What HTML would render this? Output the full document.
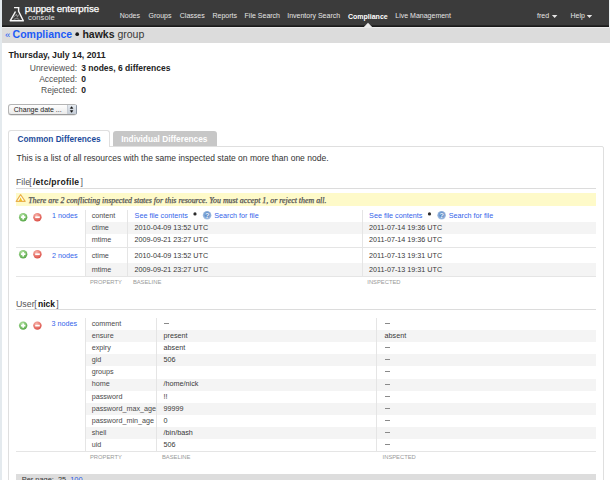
<!DOCTYPE html>
<html><head><meta charset="utf-8"><style>
html,body{margin:0;padding:0;background:#fff;width:610px;height:480px;overflow:hidden;position:relative}
body>div,body>svg{position:absolute}
.t{white-space:nowrap;font-family:"Liberation Sans",sans-serif}
</style></head><body>
<div style="left:0px;top:0px;width:2px;height:480px;background:#e4eaee;"></div>
<div style="left:609px;top:0px;width:1px;height:27px;background:#eef3f5;"></div>
<div style="left:2px;top:0px;width:607px;height:27px;background:#3b3b3b;"></div>
<div style="left:2px;top:25px;width:607px;height:2px;background:linear-gradient(#2c2c2c,#141414);"></div>
<div style="left:2px;top:27px;width:608px;height:1px;background:#ebebeb;"></div>
<div style="left:2px;top:28px;width:608px;height:15px;background:#dcdcdc;"></div>
<svg style="position:absolute;left:0;top:0" width="40" height="27" viewBox="0 0 40 27">
<g fill="none" stroke="#f8f8f8" stroke-width="1.45" stroke-linejoin="round">
<path d="M14.0 7.6 H19.4 M18.6 7.6 V11.3 L23.3 20.8 H10.2 L15.5 11.5"/>
</g>
<g fill="none" stroke="#9c9c9c" stroke-width="0.9">
<path d="M13.2 17.6 L15.4 15.2 L17.6 16.2 M13.8 19.4 L16.6 18.4 L19.4 19.4 M15.9 13.8 L17.2 15.4 M18.6 14.6 L17.2 17.4"/>
</g>
</svg>
<div class="t" style="left:24.8px;top:3.53px;font-size:9.75px;line-height:9.75px;color:#ffffff;font-weight:normal;font-family:'Liberation Sans', sans-serif;font-style:normal;letter-spacing:-0.1px;-webkit-text-stroke:0.25px #fff">puppet enterprise</div>
<div class="t" style="left:28.0px;top:14.40px;font-size:7.6px;line-height:7.6px;color:#e2e2e2;font-weight:normal;font-family:'Liberation Sans', sans-serif;font-style:normal;letter-spacing:0.1px">console</div>
<div class="t" style="left:119.69999999999999px;top:12.10px;font-size:7px;line-height:7px;color:#e5e5e5;font-weight:normal;font-family:'Liberation Sans', sans-serif;font-style:normal;">Nodes</div>
<div class="t" style="left:148.5px;top:12.10px;font-size:7px;line-height:7px;color:#e5e5e5;font-weight:normal;font-family:'Liberation Sans', sans-serif;font-style:normal;">Groups</div>
<div class="t" style="left:179.79999999999998px;top:12.10px;font-size:7px;line-height:7px;color:#e5e5e5;font-weight:normal;font-family:'Liberation Sans', sans-serif;font-style:normal;">Classes</div>
<div class="t" style="left:212.5px;top:12.10px;font-size:7px;line-height:7px;color:#e5e5e5;font-weight:normal;font-family:'Liberation Sans', sans-serif;font-style:normal;">Reports</div>
<div class="t" style="left:244.6px;top:12.10px;font-size:7px;line-height:7px;color:#e5e5e5;font-weight:normal;font-family:'Liberation Sans', sans-serif;font-style:normal;">File Search</div>
<div class="t" style="left:287.20000000000005px;top:12.10px;font-size:7px;line-height:7px;color:#e5e5e5;font-weight:normal;font-family:'Liberation Sans', sans-serif;font-style:normal;">Inventory Search</div>
<div class="t" style="left:348.0px;top:12.80px;font-size:7px;line-height:7px;color:#ffffff;font-weight:bold;font-family:'Liberation Sans', sans-serif;font-style:normal;">Compliance</div>
<div class="t" style="left:395.3px;top:12.10px;font-size:7px;line-height:7px;color:#e5e5e5;font-weight:normal;font-family:'Liberation Sans', sans-serif;font-style:normal;">Live Management</div>
<div class="t" style="left:537.0px;top:12.10px;font-size:7px;line-height:7px;color:#e5e5e5;font-weight:normal;font-family:'Liberation Sans', sans-serif;font-style:normal;">fred</div>
<div class="t" style="left:570.5px;top:12.10px;font-size:7px;line-height:7px;color:#e5e5e5;font-weight:normal;font-family:'Liberation Sans', sans-serif;font-style:normal;">Help</div>
<svg style="position:absolute;left:0;top:0" width="610" height="28" viewBox="0 0 610 28">
<path d="M551.9 14.9 H557.4 L554.65 18.0 Z M586.7 14.9 H592.2 L589.45 18.0 Z" fill="#e4e4e4"/>
<path d="M363.6 27.2 L368 22.8 L372.4 27.2 Z" fill="#ebebeb"/>
</svg>
<div class="t" style="left:5.0px;top:30.30px;font-size:9.6px;line-height:9.6px;color:#1d5bf6;font-weight:normal;font-family:'Liberation Sans', sans-serif;font-style:normal;">&laquo;</div>
<div class="t" style="left:12.6px;top:28.95px;font-size:10.5px;line-height:10.5px;color:#1d5bf6;font-weight:bold;font-family:'Liberation Sans', sans-serif;font-style:normal;">Compliance</div>
<svg style="position:absolute;left:0;top:0" width="100" height="45"><circle cx="77.2" cy="34.2" r="1.85" fill="#1a1a1a"/></svg>
<div class="t" style="left:82.4px;top:28.95px;font-size:10.5px;line-height:10.5px;color:#222;font-weight:bold;font-family:'Liberation Sans', sans-serif;font-style:normal;">hawks</div>
<div class="t" style="left:117.4px;top:28.95px;font-size:10.5px;line-height:10.5px;color:#383838;font-weight:normal;font-family:'Liberation Sans', sans-serif;font-style:normal;">group</div>
<div class="t" style="left:8.5px;top:50.62px;font-size:8.75px;line-height:8.75px;color:#222;font-weight:bold;font-family:'Liberation Sans', sans-serif;font-style:normal;">Thursday, July 14, 2011</div>
<div class="t" style="left:0;width:77px;text-align:right;top:64.30px;font-size:8.5px;line-height:8.5px;color:#505050">Unreviewed:</div>
<div class="t" style="left:81.2px;top:64.25px;font-size:8.5px;line-height:8.5px;color:#222;font-weight:bold;font-family:'Liberation Sans', sans-serif;font-style:normal;">3 nodes, 6 differences</div>
<div class="t" style="left:0;width:77px;text-align:right;top:75.40px;font-size:8.5px;line-height:8.5px;color:#505050">Accepted:</div>
<div class="t" style="left:81.2px;top:75.35px;font-size:8.5px;line-height:8.5px;color:#222;font-weight:bold;font-family:'Liberation Sans', sans-serif;font-style:normal;">0</div>
<div class="t" style="left:0;width:77px;text-align:right;top:85.90px;font-size:8.5px;line-height:8.5px;color:#505050">Rejected:</div>
<div class="t" style="left:81.2px;top:85.85px;font-size:8.5px;line-height:8.5px;color:#222;font-weight:bold;font-family:'Liberation Sans', sans-serif;font-style:normal;">0</div>
<div style="left:8px;top:104px;width:69px;height:11px;box-sizing:border-box;border:1px solid #b4b4b4;border-bottom-color:#9a9a9a;border-radius:3px;background:linear-gradient(#fefefe,#ebebeb);box-shadow:0 0.6px 0.6px rgba(0,0,0,0.18)"></div>
<div style="left:66.6px;top:105px;width:9.6px;height:9px;background:linear-gradient(#e6ebf1,#c4ccd6);border-radius:0 2px 2px 0;border-left:0.6px solid #c8cdd4"></div>
<div style="left:76px;top:105px;width:1px;height:9px;background:#8c96a4;border-radius:0 2px 2px 0"></div>
<svg style="position:absolute;left:0;top:0" width="90" height="120" viewBox="0 0 90 120"><path d="M70.3 108.4 L71.6 106.6 L72.9 108.4 Z M70.3 110.6 L71.6 112.4 L72.9 110.6 Z" fill="#111" stroke="#111" stroke-width="0.5" stroke-linejoin="round"/></svg>
<div class="t" style="left:13.8px;top:106.00px;font-size:7px;line-height:7px;color:#222;font-weight:normal;font-family:'Liberation Sans', sans-serif;font-style:normal;">Change date ...</div>
<div style="left:8px;top:145.5px;width:595.5px;height:400px;box-sizing:border-box;border:1px solid #dfdfdf;border-radius:2px"></div>
<div style="left:8px;top:130px;width:102px;height:17px;box-sizing:border-box;border:1px solid #dfdfdf;border-bottom:none;border-radius:3px 3px 0 0;background:#fff"></div>
<div style="left:9px;top:145px;width:100px;height:2px;background:#fff;"></div>
<div style="left:112.8px;top:131px;width:104px;height:15px;background:#c7c7c7;border-radius:3px 3px 0 0"></div>
<div class="t" style="left:17.6px;top:135.57px;font-size:8.25px;line-height:8.25px;color:#1d4c9b;font-weight:bold;font-family:'Liberation Sans', sans-serif;font-style:normal;">Common Differences</div>
<div class="t" style="left:121.2px;top:135.05px;font-size:8.3px;line-height:8.3px;color:#ffffff;font-weight:bold;font-family:'Liberation Sans', sans-serif;font-style:normal;">Individual Differences</div>
<div class="t" style="left:16.6px;top:153.74px;font-size:8.52px;line-height:8.52px;color:#333;font-weight:normal;font-family:'Liberation Sans', sans-serif;font-style:normal;">This is a list of all resources with the same inspected state on more than one node.</div>
<div class="t" style="left:16.0px;top:178.20px;font-size:8.8px;line-height:8.8px;color:#555;font-weight:normal;font-family:'Liberation Sans', sans-serif;font-style:normal;">File</div>
<div class="t" style="left:29.2px;top:178.20px;font-size:8.8px;line-height:8.8px;color:#556;font-weight:normal;font-family:'Liberation Sans', sans-serif;font-style:normal;">[</div>
<div class="t" style="left:32.9px;top:178.30px;font-size:8.6px;line-height:8.6px;color:#1a1a1a;font-weight:bold;font-family:'Liberation Sans', sans-serif;font-style:normal;letter-spacing:0.25px">/etc/profile</div>
<div class="t" style="left:80.4px;top:178.20px;font-size:8.8px;line-height:8.8px;color:#556;font-weight:normal;font-family:'Liberation Sans', sans-serif;font-style:normal;">]</div>
<div style="left:16.4px;top:188px;width:579.6px;height:1px;background:#dcdcdc;"></div>
<div style="left:16.4px;top:193px;width:579.6px;height:13.3px;background:#fefac9;"></div>
<svg style="position:absolute;left:0;top:0" width="30" height="210" viewBox="0 0 30 210"><path d="M20.6 194.6 L25.2 201.4 H16.2 Z" fill="#fffdf0" stroke="#eab04c" stroke-width="1.1" stroke-linejoin="round"/><path d="M20.6 197.3 L22.3 200.9 H18.9 Z" fill="#f0c020"/></svg>
<div class="t" style="left:28.2px;top:196.75px;font-size:7.9px;line-height:7.9px;color:#555555;font-weight:normal;font-family:'Liberation Serif', serif;font-style:italic;-webkit-text-stroke:0.25px #555">There are 2 conflicting inspected states for this resource. You must accept 1, or reject them all.</div>
<div style="left:85px;top:222.3px;width:511px;height:11.899999999999977px;background:#f4f4f4;"></div>
<div style="left:85px;top:262.6px;width:511px;height:13.699999999999989px;background:#f4f4f4;"></div>
<div style="left:16.4px;top:247px;width:579.6px;height:0.9px;background:#e5e5e5;"></div>
<div style="left:16.4px;top:276px;width:579.6px;height:0.9px;background:#e5e5e5;"></div>
<div style="left:84.6px;top:210px;width:0.9px;height:66.3px;background:#e5e5e5;"></div>
<div style="left:127px;top:210px;width:0.9px;height:66.3px;background:#e5e5e5;"></div>
<div style="left:362px;top:210px;width:0.9px;height:66.3px;background:#e5e5e5;"></div>
<svg style="position:absolute;left:0;top:0" width="50" height="480" viewBox="0 0 50 480">
<defs><radialGradient id="g217" cx="0.4" cy="0.3" r="0.7"><stop offset="0" stop-color="#b4e4a4"/><stop offset="1" stop-color="#58a848"/></radialGradient>
<radialGradient id="r217" cx="0.4" cy="0.3" r="0.7"><stop offset="0" stop-color="#f8b4aa"/><stop offset="1" stop-color="#dc5048"/></radialGradient></defs>
<circle cx="23.15" cy="217.2" r="4.2" fill="url(#g217)"/>
<path d="M21 217.2 H25.4 M23.2 215.0 V219.39999999999998" stroke="#fff" stroke-width="1.7"/>
<circle cx="37.4" cy="217.2" r="4.2" fill="url(#r217)"/>
<path d="M35.2 217.2 H39.8" stroke="#fff" stroke-width="1.7"/>
</svg>
<div class="t" style="left:52px;top:211.50px;font-size:7.2px;line-height:7.2px;color:#3464ea;font-weight:normal;font-family:'Liberation Sans', sans-serif;font-style:normal;">1 nodes</div>
<svg style="position:absolute;left:0;top:0" width="50" height="480" viewBox="0 0 50 480">
<defs><radialGradient id="g254" cx="0.4" cy="0.3" r="0.7"><stop offset="0" stop-color="#b4e4a4"/><stop offset="1" stop-color="#58a848"/></radialGradient>
<radialGradient id="r254" cx="0.4" cy="0.3" r="0.7"><stop offset="0" stop-color="#f8b4aa"/><stop offset="1" stop-color="#dc5048"/></radialGradient></defs>
<circle cx="23.15" cy="254.2" r="4.2" fill="url(#g254)"/>
<path d="M21 254.2 H25.4 M23.2 252.0 V256.4" stroke="#fff" stroke-width="1.7"/>
<circle cx="37.4" cy="254.2" r="4.2" fill="url(#r254)"/>
<path d="M35.2 254.2 H39.8" stroke="#fff" stroke-width="1.7"/>
</svg>
<div class="t" style="left:52px;top:251.80px;font-size:7.2px;line-height:7.2px;color:#3464ea;font-weight:normal;font-family:'Liberation Sans', sans-serif;font-style:normal;">2 nodes</div>
<div class="t" style="left:91.7px;top:211.70px;font-size:7.2px;line-height:7.2px;color:#4a4a4a;font-weight:normal;font-family:'Liberation Sans', sans-serif;font-style:normal;">content</div>
<div class="t" style="left:134.6px;top:211.70px;font-size:7.2px;line-height:7.2px;color:#3464ea;font-weight:normal;font-family:'Liberation Sans', sans-serif;font-style:normal;">See file contents</div>
<svg style="position:absolute;left:0;top:0" width="610" height="480" viewBox="0 0 610 480"><circle cx="195.0" cy="213.9" r="1.6" fill="#2a2a2a"/><defs><radialGradient id="q134" cx="0.5" cy="0.45" r="0.55"><stop offset="0.3" stop-color="#5a88c6"/><stop offset="1" stop-color="#b0c8e6"/></radialGradient></defs><circle cx="207.1" cy="215.20000000000002" r="4.3" fill="url(#q134)"/><text x="207.1" y="217.9" font-family="Liberation Sans" font-weight="bold" font-size="7.2" fill="#eef4fb" text-anchor="middle">?</text></svg>
<div class="t" style="left:214.3px;top:211.70px;font-size:7.2px;line-height:7.2px;color:#3464ea;font-weight:normal;font-family:'Liberation Sans', sans-serif;font-style:normal;">Search for file</div>
<div class="t" style="left:369.1px;top:211.70px;font-size:7.2px;line-height:7.2px;color:#3464ea;font-weight:normal;font-family:'Liberation Sans', sans-serif;font-style:normal;">See file contents</div>
<svg style="position:absolute;left:0;top:0" width="610" height="480" viewBox="0 0 610 480"><circle cx="429.5" cy="213.9" r="1.6" fill="#2a2a2a"/><defs><radialGradient id="q369" cx="0.5" cy="0.45" r="0.55"><stop offset="0.3" stop-color="#5a88c6"/><stop offset="1" stop-color="#b0c8e6"/></radialGradient></defs><circle cx="441.6" cy="215.20000000000002" r="4.3" fill="url(#q369)"/><text x="441.6" y="217.9" font-family="Liberation Sans" font-weight="bold" font-size="7.2" fill="#eef4fb" text-anchor="middle">?</text></svg>
<div class="t" style="left:448.8px;top:211.70px;font-size:7.2px;line-height:7.2px;color:#3464ea;font-weight:normal;font-family:'Liberation Sans', sans-serif;font-style:normal;">Search for file</div>
<div class="t" style="left:91.7px;top:223.70px;font-size:7.2px;line-height:7.2px;color:#4a4a4a;font-weight:normal;font-family:'Liberation Sans', sans-serif;font-style:normal;">ctime</div>
<div class="t" style="left:134.6px;top:223.70px;font-size:7.2px;line-height:7.2px;color:#383838;font-weight:normal;font-family:'Liberation Sans', sans-serif;font-style:normal;">2010-04-09 13:52 UTC</div>
<div class="t" style="left:369.1px;top:223.70px;font-size:7.2px;line-height:7.2px;color:#383838;font-weight:normal;font-family:'Liberation Sans', sans-serif;font-style:normal;">2011-07-14 19:36 UTC</div>
<div class="t" style="left:91.7px;top:236.10px;font-size:7.2px;line-height:7.2px;color:#4a4a4a;font-weight:normal;font-family:'Liberation Sans', sans-serif;font-style:normal;">mtime</div>
<div class="t" style="left:134.6px;top:236.10px;font-size:7.2px;line-height:7.2px;color:#383838;font-weight:normal;font-family:'Liberation Sans', sans-serif;font-style:normal;">2009-09-21 23:27 UTC</div>
<div class="t" style="left:369.1px;top:236.10px;font-size:7.2px;line-height:7.2px;color:#383838;font-weight:normal;font-family:'Liberation Sans', sans-serif;font-style:normal;">2011-07-14 19:36 UTC</div>
<div class="t" style="left:91.7px;top:251.80px;font-size:7.2px;line-height:7.2px;color:#4a4a4a;font-weight:normal;font-family:'Liberation Sans', sans-serif;font-style:normal;">ctime</div>
<div class="t" style="left:134.6px;top:251.80px;font-size:7.2px;line-height:7.2px;color:#383838;font-weight:normal;font-family:'Liberation Sans', sans-serif;font-style:normal;">2010-04-09 13:52 UTC</div>
<div class="t" style="left:369.1px;top:251.80px;font-size:7.2px;line-height:7.2px;color:#383838;font-weight:normal;font-family:'Liberation Sans', sans-serif;font-style:normal;">2011-07-13 19:31 UTC</div>
<div class="t" style="left:91.7px;top:265.80px;font-size:7.2px;line-height:7.2px;color:#4a4a4a;font-weight:normal;font-family:'Liberation Sans', sans-serif;font-style:normal;">mtime</div>
<div class="t" style="left:134.6px;top:265.80px;font-size:7.2px;line-height:7.2px;color:#383838;font-weight:normal;font-family:'Liberation Sans', sans-serif;font-style:normal;">2009-09-21 23:27 UTC</div>
<div class="t" style="left:369.1px;top:265.80px;font-size:7.2px;line-height:7.2px;color:#383838;font-weight:normal;font-family:'Liberation Sans', sans-serif;font-style:normal;">2011-07-13 19:31 UTC</div>
<div class="t" style="left:90.0px;top:279.70px;font-size:5.8px;line-height:5.8px;color:#999;font-weight:normal;font-family:'Liberation Sans', sans-serif;font-style:normal;">PROPERTY</div>
<div class="t" style="left:132.9px;top:279.70px;font-size:5.8px;line-height:5.8px;color:#999;font-weight:normal;font-family:'Liberation Sans', sans-serif;font-style:normal;">BASELINE</div>
<div class="t" style="left:367.3px;top:279.70px;font-size:5.8px;line-height:5.8px;color:#999;font-weight:normal;font-family:'Liberation Sans', sans-serif;font-style:normal;">INSPECTED</div>
<div class="t" style="left:16.0px;top:299.50px;font-size:8.8px;line-height:8.8px;color:#555;font-weight:normal;font-family:'Liberation Sans', sans-serif;font-style:normal;">User</div>
<div class="t" style="left:34.3px;top:299.50px;font-size:8.8px;line-height:8.8px;color:#556;font-weight:normal;font-family:'Liberation Sans', sans-serif;font-style:normal;">[</div>
<div class="t" style="left:38.0px;top:299.65px;font-size:8.5px;line-height:8.5px;color:#111;font-weight:bold;font-family:'Liberation Sans', sans-serif;font-style:normal;">nick</div>
<div class="t" style="left:56.3px;top:299.50px;font-size:8.8px;line-height:8.8px;color:#556;font-weight:normal;font-family:'Liberation Sans', sans-serif;font-style:normal;">]</div>
<div style="left:16.4px;top:309px;width:579.6px;height:1px;background:#dcdcdc;"></div>
<div style="left:85px;top:330.1px;width:511px;height:12.1px;background:#f4f4f4;"></div>
<div style="left:85px;top:354.3px;width:511px;height:12.1px;background:#f4f4f4;"></div>
<div style="left:85px;top:378.5px;width:511px;height:12.1px;background:#f4f4f4;"></div>
<div style="left:85px;top:402.7px;width:511px;height:12.1px;background:#f4f4f4;"></div>
<div style="left:85px;top:426.9px;width:511px;height:12.1px;background:#f4f4f4;"></div>
<div style="left:84.6px;top:318px;width:0.9px;height:133.1px;background:#e5e5e5;"></div>
<div style="left:156.3px;top:318px;width:0.9px;height:133.1px;background:#e5e5e5;"></div>
<div style="left:376.4px;top:318px;width:0.9px;height:133.1px;background:#e5e5e5;"></div>
<div style="left:16.4px;top:451.40000000000003px;width:579.6px;height:0.9px;background:#e5e5e5;"></div>
<svg style="position:absolute;left:0;top:0" width="50" height="480" viewBox="0 0 50 480">
<defs><radialGradient id="g325" cx="0.4" cy="0.3" r="0.7"><stop offset="0" stop-color="#b4e4a4"/><stop offset="1" stop-color="#58a848"/></radialGradient>
<radialGradient id="r325" cx="0.4" cy="0.3" r="0.7"><stop offset="0" stop-color="#f8b4aa"/><stop offset="1" stop-color="#dc5048"/></radialGradient></defs>
<circle cx="23.15" cy="325.6" r="4.2" fill="url(#g325)"/>
<path d="M21 325.6 H25.4 M23.2 323.40000000000003 V327.8" stroke="#fff" stroke-width="1.7"/>
<circle cx="37.4" cy="325.6" r="4.2" fill="url(#r325)"/>
<path d="M35.2 325.6 H39.8" stroke="#fff" stroke-width="1.7"/>
</svg>
<div class="t" style="left:51.6px;top:319.60px;font-size:7.2px;line-height:7.2px;color:#3464ea;font-weight:normal;font-family:'Liberation Sans', sans-serif;font-style:normal;">3 nodes</div>
<div class="t" style="left:91.7px;top:319.90px;font-size:7.2px;line-height:7.2px;color:#4a4a4a;font-weight:normal;font-family:'Liberation Sans', sans-serif;font-style:normal;">comment</div>
<div style="left:163.79999999999998px;top:323.0px;width:5.6px;height:0.8px;background:#8a8a8a;"></div>
<div style="left:384.8px;top:323.0px;width:5.6px;height:0.8px;background:#8a8a8a;"></div>
<div class="t" style="left:91.7px;top:332.00px;font-size:7.2px;line-height:7.2px;color:#4a4a4a;font-weight:normal;font-family:'Liberation Sans', sans-serif;font-style:normal;">ensure</div>
<div class="t" style="left:163.6px;top:332.00px;font-size:7.2px;line-height:7.2px;color:#383838;font-weight:normal;font-family:'Liberation Sans', sans-serif;font-style:normal;">present</div>
<div class="t" style="left:384.6px;top:332.00px;font-size:7.2px;line-height:7.2px;color:#383838;font-weight:normal;font-family:'Liberation Sans', sans-serif;font-style:normal;">absent</div>
<div class="t" style="left:91.7px;top:344.10px;font-size:7.2px;line-height:7.2px;color:#4a4a4a;font-weight:normal;font-family:'Liberation Sans', sans-serif;font-style:normal;">expiry</div>
<div class="t" style="left:163.6px;top:344.10px;font-size:7.2px;line-height:7.2px;color:#383838;font-weight:normal;font-family:'Liberation Sans', sans-serif;font-style:normal;">absent</div>
<div style="left:384.8px;top:347.2px;width:5.6px;height:0.8px;background:#8a8a8a;"></div>
<div class="t" style="left:91.7px;top:356.20px;font-size:7.2px;line-height:7.2px;color:#4a4a4a;font-weight:normal;font-family:'Liberation Sans', sans-serif;font-style:normal;">gid</div>
<div class="t" style="left:163.6px;top:356.20px;font-size:7.2px;line-height:7.2px;color:#383838;font-weight:normal;font-family:'Liberation Sans', sans-serif;font-style:normal;">506</div>
<div style="left:384.8px;top:359.3px;width:5.6px;height:0.8px;background:#8a8a8a;"></div>
<div class="t" style="left:91.7px;top:368.30px;font-size:7.2px;line-height:7.2px;color:#4a4a4a;font-weight:normal;font-family:'Liberation Sans', sans-serif;font-style:normal;">groups</div>
<div class="t" style="left:163.6px;top:368.30px;font-size:7.2px;line-height:7.2px;color:#383838;font-weight:normal;font-family:'Liberation Sans', sans-serif;font-style:normal;"></div>
<div style="left:384.8px;top:371.4px;width:5.6px;height:0.8px;background:#8a8a8a;"></div>
<div class="t" style="left:91.7px;top:380.40px;font-size:7.2px;line-height:7.2px;color:#4a4a4a;font-weight:normal;font-family:'Liberation Sans', sans-serif;font-style:normal;">home</div>
<div class="t" style="left:163.6px;top:380.40px;font-size:7.2px;line-height:7.2px;color:#383838;font-weight:normal;font-family:'Liberation Sans', sans-serif;font-style:normal;">/home/nick</div>
<div style="left:384.8px;top:383.5px;width:5.6px;height:0.8px;background:#8a8a8a;"></div>
<div class="t" style="left:91.7px;top:392.50px;font-size:7.2px;line-height:7.2px;color:#4a4a4a;font-weight:normal;font-family:'Liberation Sans', sans-serif;font-style:normal;">password</div>
<div class="t" style="left:163.6px;top:392.50px;font-size:7.2px;line-height:7.2px;color:#383838;font-weight:normal;font-family:'Liberation Sans', sans-serif;font-style:normal;">!!</div>
<div style="left:384.8px;top:395.6px;width:5.6px;height:0.8px;background:#8a8a8a;"></div>
<div class="t" style="left:91.7px;top:404.60px;font-size:7.2px;line-height:7.2px;color:#4a4a4a;font-weight:normal;font-family:'Liberation Sans', sans-serif;font-style:normal;">password_max_age</div>
<div class="t" style="left:163.6px;top:404.60px;font-size:7.2px;line-height:7.2px;color:#383838;font-weight:normal;font-family:'Liberation Sans', sans-serif;font-style:normal;">99999</div>
<div style="left:384.8px;top:407.7px;width:5.6px;height:0.8px;background:#8a8a8a;"></div>
<div class="t" style="left:91.7px;top:416.70px;font-size:7.2px;line-height:7.2px;color:#4a4a4a;font-weight:normal;font-family:'Liberation Sans', sans-serif;font-style:normal;">password_min_age</div>
<div class="t" style="left:163.6px;top:416.70px;font-size:7.2px;line-height:7.2px;color:#383838;font-weight:normal;font-family:'Liberation Sans', sans-serif;font-style:normal;">0</div>
<div style="left:384.8px;top:419.8px;width:5.6px;height:0.8px;background:#8a8a8a;"></div>
<div class="t" style="left:91.7px;top:428.80px;font-size:7.2px;line-height:7.2px;color:#4a4a4a;font-weight:normal;font-family:'Liberation Sans', sans-serif;font-style:normal;">shell</div>
<div class="t" style="left:163.6px;top:428.80px;font-size:7.2px;line-height:7.2px;color:#383838;font-weight:normal;font-family:'Liberation Sans', sans-serif;font-style:normal;">/bin/bash</div>
<div style="left:384.8px;top:431.9px;width:5.6px;height:0.8px;background:#8a8a8a;"></div>
<div class="t" style="left:91.7px;top:440.90px;font-size:7.2px;line-height:7.2px;color:#4a4a4a;font-weight:normal;font-family:'Liberation Sans', sans-serif;font-style:normal;">uid</div>
<div class="t" style="left:163.6px;top:440.90px;font-size:7.2px;line-height:7.2px;color:#383838;font-weight:normal;font-family:'Liberation Sans', sans-serif;font-style:normal;">506</div>
<div style="left:384.8px;top:444.0px;width:5.6px;height:0.8px;background:#8a8a8a;"></div>
<div class="t" style="left:90.0px;top:454.50px;font-size:5.8px;line-height:5.8px;color:#999;font-weight:normal;font-family:'Liberation Sans', sans-serif;font-style:normal;">PROPERTY</div>
<div class="t" style="left:162.0px;top:454.50px;font-size:5.8px;line-height:5.8px;color:#999;font-weight:normal;font-family:'Liberation Sans', sans-serif;font-style:normal;">BASELINE</div>
<div class="t" style="left:382.6px;top:454.50px;font-size:5.8px;line-height:5.8px;color:#999;font-weight:normal;font-family:'Liberation Sans', sans-serif;font-style:normal;">INSPECTED</div>
<div style="left:16px;top:474px;width:580px;height:10px;background:#dddddd;"></div>
<div class="t" style="left:21.8px;top:476.25px;font-size:7.4px;line-height:7.4px;color:#333;font-weight:normal;font-family:'Liberation Sans', sans-serif;font-style:normal;">Per page:</div>
<div class="t" style="left:57.9px;top:476.25px;font-size:7.4px;line-height:7.4px;color:#333;font-weight:normal;font-family:'Liberation Sans', sans-serif;font-style:normal;">25</div>
<div class="t" style="left:70.2px;top:476.25px;font-size:7.4px;line-height:7.4px;color:#2a5ae6;font-weight:normal;font-family:'Liberation Sans', sans-serif;font-style:normal;">100</div>
</body></html>
